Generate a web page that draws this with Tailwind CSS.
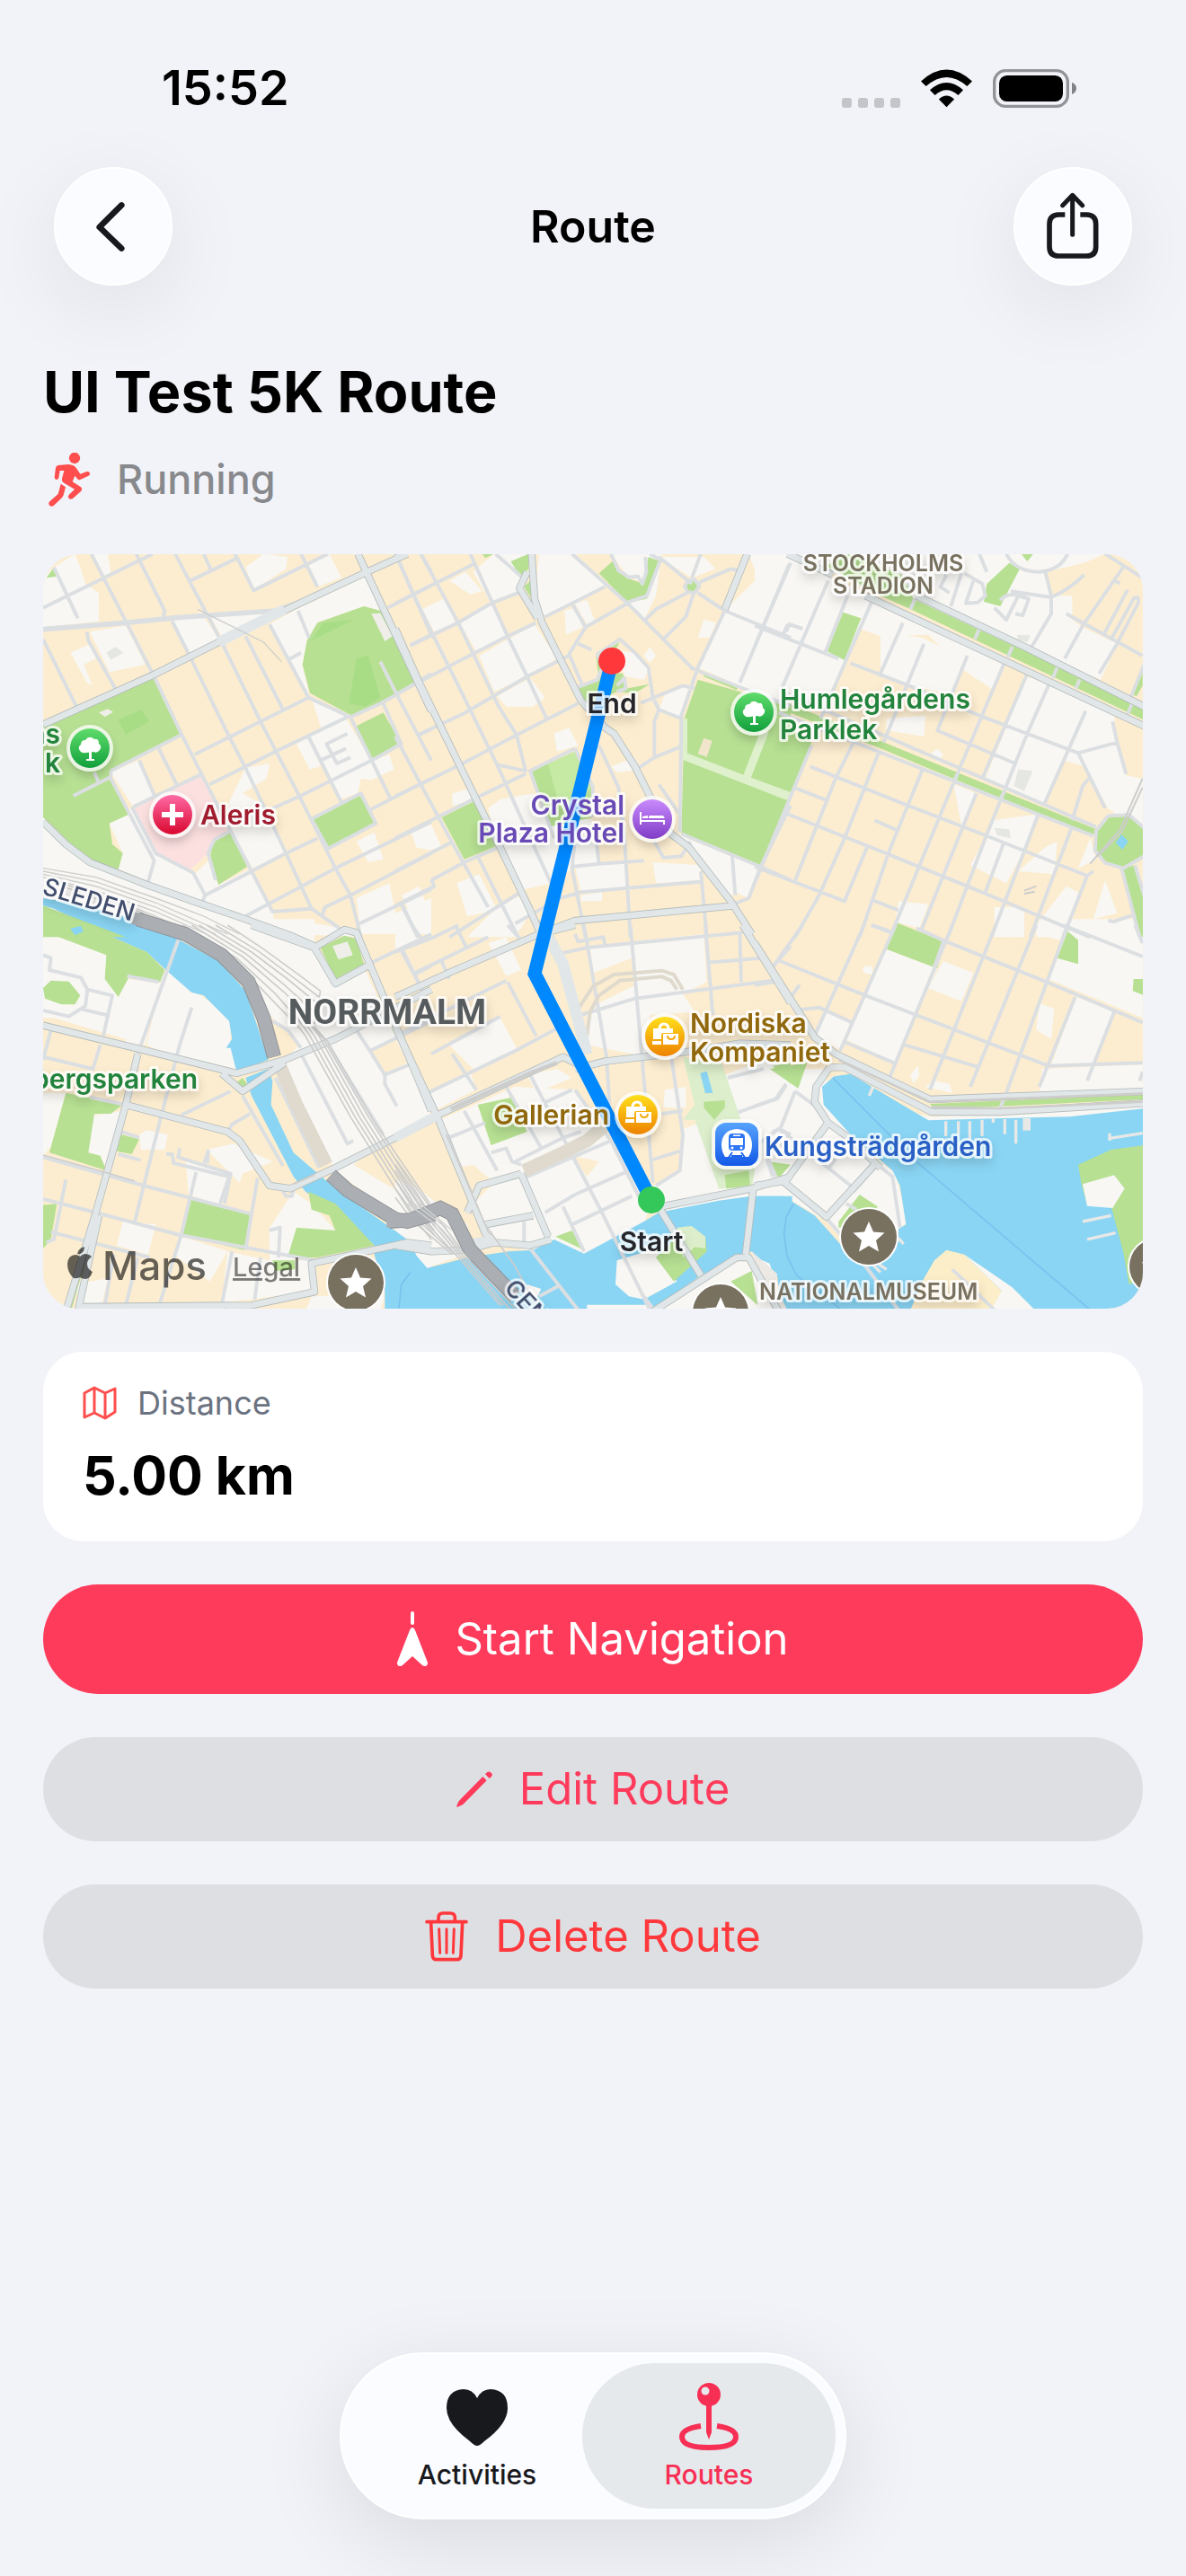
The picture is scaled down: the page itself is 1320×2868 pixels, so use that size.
<!DOCTYPE html>
<html lang="en">
<head>
<meta charset="utf-8">
<meta name="viewport" content="width=device-width, initial-scale=1">
<title>Route</title>
<script src="https://cdn.jsdelivr.net/npm/@tailwindcss/browser@4"></script>
</head>
<body class="bg-[#f2f3f8] font-['Inter','Liberation_Sans',sans-serif] text-black">
<div class="flex min-h-screen flex-col">

  <!-- Status bar -->
  <div class="flex items-center justify-between pt-[62px] pr-[122px] pl-[180px]">
    <span class="text-[54px] leading-[72px] font-semibold">15:52</span>
    <div class="flex items-end gap-[23px]">
      <div class="flex gap-[7px]">
        <span class="size-[11px] rounded-[3px] bg-[#c4c5c9]"></span>
        <span class="size-[11px] rounded-[3px] bg-[#c4c5c9]"></span>
        <span class="size-[11px] rounded-[3px] bg-[#c4c5c9]"></span>
        <span class="size-[11px] rounded-[3px] bg-[#c4c5c9]"></span>
      </div>
      <svg class="h-[43px] w-[57px]" viewBox="0 0 172 129" aria-hidden="true">
        <path d="M0 40Q86-38 172 40L155 57Q86-4 17 57Z"/>
        <path d="M30 70Q86 20 142 70L125 87Q86 53 47 87Z"/>
        <path d="M60 101Q86 76 112 101L86 127Z"/>
      </svg>
      <svg class="h-[43px] w-[93px]" viewBox="0 0 279 129" aria-hidden="true">
        <rect x="5" y="5" width="245" height="119" rx="38" fill="none" stroke="#929396" stroke-width="10"/>
        <rect x="21" y="21" width="213" height="87" rx="26"/>
        <path d="M264 44q15 6 15 20t-15 20z" fill="#808184"/>
      </svg>
    </div>
  </div>

  <!-- Navigation bar -->
  <header class="mt-[52px] flex items-center justify-between px-[60px]">
    <button type="button" aria-label="Back" class="flex size-[132px] items-center justify-center rounded-full border-2 border-white bg-[#fbfcff] pr-[6px] shadow-[0_24px_96px_rgba(0,0,0,0.08)]">
      <svg class="h-[58px] w-[34px]" viewBox="0 0 36 60" fill="none" stroke="#18191d" stroke-width="7" stroke-linecap="round" stroke-linejoin="round"><path d="M31 5L5 31l26 25"/></svg>
    </button>
    <span class="text-[50px] leading-[64px] font-semibold">Route</span>
    <button type="button" aria-label="Share" class="flex size-[132px] items-center justify-center rounded-full border-2 border-white bg-[#fbfcff] shadow-[0_24px_96px_rgba(0,0,0,0.08)]">
      <svg class="h-[76px] w-[58px]" viewBox="0 0 174 228" fill="none" stroke="#18191d" stroke-width="17" stroke-linecap="round" stroke-linejoin="round"><path stroke-linecap="butt" d="M61 75H40Q9 76 9 106V182Q9 213 40 213H133Q164 213 164 182V106Q164 76 133 75H112"/><path stroke-width="15" d="M86 142V12M53 44L86 10L119 44"/></svg>
    </button>
  </header>

  <main class="flex flex-col px-12">
    <h1 class="mt-[78px] text-[63px] leading-[80px] font-bold">UI Test 5K Route</h1>
    <div class="mt-[26px] flex items-center gap-[30px] pl-[6px]">
      <svg class="h-[60px] w-[46px]" viewBox="54 342 138 180" aria-hidden="true">
        <circle cx="141" cy="360" r="18.500" fill="#ff4e4e"/>
        <path fill="#ff4e4e" d="M87 384L120 381Q140 382 148 395L160 413L182 405Q192 404 192 413Q191 418 186 420L160 432Q154 434 150 429L142 419L134 439L162 457Q168 463 163 470L135 495Q128 500 122 495Q117 489 122 483L141 464L107 444Q97 438 99 428L106 402L92 402L88 426Q86 433 80 432Q73 431 74 424L78 392Q80 385 87 384Z"/>
        <path fill="#ff4e4e" d="M95 446L111 457L104 484Q102 490 97 494L71 519Q64 524 57 518Q52 511 58 505L86 480Z"/>
      </svg>
      <span class="text-[45px] leading-[64px] font-medium text-[#88898d]">Running</span>
    </div>

    <!-- Route map -->
    <section class="mt-[51px] overflow-hidden rounded-[40px] bg-[#fcedd0]" aria-label="Route map">
      <svg class="block h-auto w-full" viewBox="0 0 1224 840" font-family="Inter, 'Liberation Sans', sans-serif">
        <defs>
          <linearGradient id="gGreen" x2="0" y2="1"><stop stop-color="#5fdc6b"/><stop offset="1" stop-color="#12a03c"/></linearGradient>
          <linearGradient id="gRed" x2="0" y2="1"><stop stop-color="#ff6aa5"/><stop offset="1" stop-color="#d8082f"/></linearGradient>
          <linearGradient id="gPurple" x2="0" y2="1"><stop stop-color="#c98bfd"/><stop offset="1" stop-color="#803cc6"/></linearGradient>
          <linearGradient id="gGold" x2="0" y2="1"><stop stop-color="#ffdf1c"/><stop offset="1" stop-color="#ee8200"/></linearGradient>
          <linearGradient id="gBlue" x2="0" y2="1"><stop stop-color="#56a3fd"/><stop offset="1" stop-color="#1459e8"/></linearGradient>
          <filter id="soft" x="-50%" y="-50%" width="200%" height="200%"><feDropShadow dx="0" dy="6" stdDeviation="5" flood-color="#000" flood-opacity=".22"/></filter>
          <filter id="textSoft" x="-20%" y="-40%" width="140%" height="200%"><feDropShadow dx="0" dy="6" stdDeviation="6" flood-color="#000" flood-opacity=".16"/></filter>
          <g id="tree" fill="#fff"><path d="M-11 3q-3-4 1-7 0-5 5-5 4-6 10-1 5-1 5 5 4 3 1 7-3 4-7 2l-8 1q-5 1-7-2z"/><path d="M-1-2h3v14h3v2h-9v-2h3z"/></g>
          <path id="star" fill="#fff" d="M0-17l5 11.500 12.500 1-9.500 8.500 3 12.500L0 10l-11 6.500 3-12.500-9.500-8.500 12.500-1z"/>
          <g id="landmark"><circle r="33" fill="#fff"/><circle r="31" fill="#797160"/><use href="#star"/></g>
          <g id="shop"><circle r="26" fill="#fff" fill-opacity=".75" filter="url(#soft)"/><circle r="22" fill="url(#gGold)"/><path d="M-6-8q0-6 5-6t5 6" fill="none" stroke="#fff" stroke-width="3"/><path fill="#fff" d="M-13-9H9v5H-2q-2 0-2 2v5h-9zM-14 5H-4v4h-10zM-2-3H15V9H-2z"/><path d="M3-1q0 4 4 4t4-4" fill="none" stroke="#f5a80e" stroke-width="2"/></g>
          <!-- street network, one path per map sheet -->
          <path id="majA" d="M24 620L390 455L610 345L880 215L1105 110L1240 50M1075 50L1320 575M24 945L100 1020L180 1080L370 1155L540 1215L700 1270L850 1325L930 1360"/>
          <path id="majB" d="M455 50L465 200L490 280L620 540L700 630L730 650L800 760L850 860L920 985L980 1030L1120 1210L1190 1320M440 110L415 165L475 265M0 300L80 480L265 860L350 1030L450 1240L490 1330M520 1305L600 1275L1130 1225M1175 50L1100 235M0 65L30 50"/>
          <path id="majC" d="M370 190L830 405L1300 625M540 190L900 360L1300 560M110 50L260 120"/>
          <path id="majD" d="M24 335L350 415L670 495L830 450L1000 380L1320 215M340 430L300 600L200 960L100 1290M210 970L140 1290M300 600L640 690L680 720L780 870L850 880L1000 810L1320 650M620 495L690 555L830 460M720 0L930 75L1030 15L1070 25L1220 380L1320 620M930 75L1000 195L1110 135M150 1275L720 1270L930 1225L920 1130L1240 1060L1320 1070"/>
          <path id="majE" d="M0 240L200 150L480 30L600 0M0 710L130 640L560 440L620 470M0 340L140 640L300 1030L330 1060M490 -20L560 130L640 430M600 480L700 455L960 425L1150 395L1320 400M1160 0L1320 260M890 940L1190 880L1320 840M1195 880L1170 1100M885 950L1020 1170M860 1290L1140 1110L1180 1110L1280 1290M0 1070L120 1090L240 1085L330 1060L450 1070L520 1050M420 830L510 1040M300 1000L460 970M240 960L280 870L420 830"/>
          <path id="majF" d="M0 60L70 170L160 310L200 375L270 430L585 582L1300 555M250 475L300 475L590 624L820 624L1300 595M250 475L205 540L200 590L245 660L300 700L420 810M245 660L100 860L240 975L400 800M0 870L100 855"/>
        </defs>

        <!-- pale blocks -->
        <g fill="#f8f7f3">
          <path transform="translate(-8 -17) scale(.33333)" d="M24 130L60 95L130 50L150 100L165 150L210 180V275L24 295ZM185 50H240L250 110L225 130ZM700 95L760 50L840 60L835 100L727 170ZM910 90L980 50L1020 130L940 160ZM870 235L1100 125L1150 240L1095 225L940 280L905 340L890 420L915 530L780 285ZM180 310L300 290L365 420L245 445ZM115 380L180 350L200 400L160 420L188 490L170 480ZM455 275L550 245L615 340L515 385ZM580 255L780 240L620 325ZM250 780L340 740L395 855L325 895ZM24 930L180 1080L290 1050L245 950L325 895L405 1055L530 1120L575 1075L610 1155L720 1100L790 1240L800 1320H24ZM640 890L700 765L780 750L770 800L690 850L760 890L835 1050L720 1100L650 970ZM870 685L910 665L950 760L915 770ZM910 660L1035 600L1120 740L1180 720L1195 770L1120 805L1085 800L1075 850L1015 870ZM920 530L1050 590L955 640ZM1070 1200L1180 1150L1200 1250L1320 1200V1320H1085ZM1255 985L1320 950V1040L1270 1030ZM880 1320L910 1280L1020 1300L1080 1330ZM1070 1010L1130 980L1160 1070L1110 1080Z"/>
          <path transform="translate(392 -17) scale(.33333)" d="M180 140L235 110L290 175L250 185ZM260 110L330 50H440L415 180L320 215ZM480 50H600L710 155L500 260L465 200ZM215 280L320 220L375 320L270 375ZM280 390L465 285L540 400L440 460L330 510ZM90 235L170 195L200 280L130 310ZM340 525L450 465L500 530L460 560L370 560ZM530 650L580 630L610 690L540 710ZM880 60H1030L1070 100L990 130ZM1180 50H1320V560L1150 490L1010 430L1100 235L1150 190L1210 130ZM720 50H890L870 190L830 270L775 215L850 150L780 130ZM600 215L640 205L665 270L640 285ZM565 240L600 230L625 295L570 320ZM720 370L800 380L850 430L830 470L770 460ZM830 390L850 360L870 390L850 415ZM900 520L960 490L990 510L955 600L880 570ZM1010 330L1030 270L1070 280L1050 330ZM720 760L800 730L820 770L740 780ZM190 850L260 830V880L190 890ZM350 870L460 850L500 920L660 940L680 1090L590 1100L530 1150L430 1170L340 1020L310 900ZM600 1095L770 1080V1170L620 1180ZM950 990L1120 1060L1130 1190L1090 1180L1030 1110L970 1040ZM1125 1060L1220 1095L1180 1200L1135 1180ZM860 1080L1020 1090V1140L870 1150ZM50 980L120 955L160 1040L80 1030ZM205 1150L280 1120L340 1240L240 1260ZM20 1190L80 1160L110 1240L60 1270ZM340 1230L420 1190L450 1250L400 1330H240ZM620 1190L690 1180V1210H620Z"/>
          <path transform="translate(792 -17) scale(.33333)" d="M130 50H1170L1100 80L970 110L990 190L1060 190V270L1095 295L1210 350L1155 470L420 190ZM0 50H100L840 410L790 500L700 440L580 320L420 325L350 300L310 400L230 580L0 490ZM420 310L560 330L700 400L665 520L510 490L420 460ZM900 460L990 480L1200 590L1210 680L1240 790L1295 800V980L1180 900L1100 760L1035 740L970 890L770 800L840 630ZM440 600L570 590L565 660L440 640ZM590 715L610 700L630 720L610 745ZM665 820L740 850L690 960ZM790 940L945 920L900 1040L840 1150L720 1090L770 1000ZM970 1030L1010 1010L1000 1120L880 1110ZM480 1210L580 1220L550 1300L470 1280ZM1120 1000L1140 1070L1080 1100ZM1170 1140L1210 1250L1130 1270ZM940 1290L1040 1160L1080 1180L1050 1330H940ZM800 1230H900V1330H800Z"/>
          <path transform="translate(-8 413) scale(.33333)" d="M24 -20L240 100L230 160L275 240L300 180L415 190L365 400L160 340L60 310L24 310ZM420 170L440 150L650 310V400L670 480L460 440L370 400ZM300 -20H930V75L990 190L1100 150L1150 260L1320 640L1160 720L1060 800L1310 950L1200 975L1000 820L800 480L880 400L780 300L700 150L500 30ZM170 640L290 620L235 800L170 760ZM24 560H100L50 740L24 770ZM345 700L370 685L440 700L430 750H350ZM500 790L640 830L620 940L510 900ZM570 750L660 730L790 790L690 830L680 860ZM290 990L400 1000L375 1100L270 1070ZM490 1040L640 1090L580 1190L460 1100ZM640 1090L780 1120V1010L860 890L920 930L1000 1020L860 1120H930V1220L720 1250L620 1260ZM130 1200L240 1180L220 1270H150ZM1150 1080L1320 1060V1150H1290L1240 1080ZM1165 1235L1150 1290H900L920 1240ZM300 350L360 340L350 400L300 390Z"/>
          <path transform="translate(392 413) scale(.33333)" d="M0 -20H60L80 50L0 80ZM310 60L370 40L420 150L370 170ZM650 70L1030 30L1040 190L960 230L1000 290L850 300L840 440L640 400V300L680 260L800 200L790 110L660 160ZM180 400L350 310L410 420L270 490ZM110 560L250 490L270 550L130 620ZM0 490L60 470L110 600L0 660ZM440 500L540 480L590 510L470 560ZM150 650L400 540L600 550L700 680L860 900L830 1000L630 1100L460 1090L320 1060L240 900ZM900 550L970 540V610H895ZM860 870L950 820L960 680L1020 660L1100 500L1250 440L1320 490V920L890 960ZM0 850L60 870L240 1000L260 1090L90 1150L0 1060Z"/>
          <path transform="translate(792 413) scale(.33333)" d="M440 80L610 145L540 300L470 460L300 380L370 230ZM580 210L630 120L730 160L690 255ZM1050 -20H1295V310L980 180L1040 20ZM1075 240L1200 290L1130 470L990 465ZM960 480L1295 465V550L950 560ZM0 480H230L265 600L600 640L1295 600V630L580 670L380 760L470 830L510 990L480 1020L400 1060H300L240 990L100 905H0ZM230 280L320 320L290 420L210 370ZM520 500L545 470L550 500L530 530ZM570 540L600 520L650 530L660 560ZM800 -20H880L870 40L810 20ZM940 0H1040L1020 50L940 30ZM950 260L1000 280L990 380L940 350ZM360 140L390 135L395 165L365 160Z"/>
        </g>
        <path fill="#fcedd0" transform="translate(-8 413) scale(.33333)" d="M1125 140L1180 110L1215 200L1262 190L1250 140L1320 110V200L1160 250ZM1110 420L1200 380L1240 460L1170 495ZM1220 370L1320 330V530L1290 520ZM1180 740L1320 680V860L1290 850L1250 800ZM1240 100L1320 40V110L1260 150Z"/>
        <path fill="#fcedd0" transform="translate(392 413) scale(.33333)" d="M0 740L60 720L150 690L230 860L140 900L50 850ZM150 820L260 800L330 860L270 920ZM590 770L680 790L640 840ZM700 700L760 700L840 820L810 850Z"/>

        <!-- water -->
        <g fill="#8ad5f4">
          <path transform="translate(-8 -17) scale(.33333)" d="M24 1200L120 1215L300 1262L470 1325H240L60 1235L24 1225Z"/>
          <path transform="translate(-8 413) scale(.33333)" d="M180 -10H370L480 50L610 120L700 220L740 340L775 450L670 490L650 410H635L655 380L645 320L560 235L520 225L440 155L370 90L210 20ZM700 510L775 480L790 520L785 600L860 760L1000 880L1240 1050L1250 1080L1310 1150H1330V1290H1165V1220L1130 1100V1070L1060 1000L900 890L860 840L720 570Z"/>
          <path transform="translate(392 413) scale(.33333)" d="M0 1020L60 1080L90 1150L240 1110L380 1090L460 1085L530 1050L630 1097L830 990L880 960L1080 920L1190 905H1325V1200L1270 1170L1190 1090L1140 1110L1020 1170L860 1285H0ZM1018 495L1040 488L1060 560L1035 562Z"/>
          <path transform="translate(792 413) scale(.33333)" d="M225 540L265 505L320 497L580 652L830 645L1050 640L1300 612V1290H90L75 1170L0 1085V905H95L200 970L290 1070L480 1060V1015L505 1000L485 870L460 820L320 700L230 600Z"/>
        </g>
        <g fill="none" stroke="#7bc1ee" stroke-width="5"><path transform="translate(792 413) scale(.33333)" d="M260 510L540 790L1120 1285M130 930L105 975L98 1030L108 1105L140 1170L290 1285"/><path transform="translate(-8 413) scale(.33333)" d="M1212 1280L1220 1200L1250 1160"/></g>

        <!-- islands -->
        <path fill="#f8f7f3" transform="translate(392 413) scale(.33333)" d="M740 1120L870 1080L940 1190L830 1250L780 1240L735 1200ZM860 1285L1180 1100L1250 1130L1300 1285ZM640 1268H850V1290H640ZM440 1200L487 1215L470 1250L430 1230Z"/>
        <path fill="#ece8e4" transform="translate(392 413) scale(.33333)" d="M1190 1090L1275 1165L1270 1200L1310 1290H1260Z"/>
        <path fill="#fdeeca" transform="translate(792 413) scale(.33333)" d="M565 1180L600 1120L640 1085L700 1100L825 1220L800 1285H520Z"/>
        <path fill="#f8f7f3" transform="translate(792 413) scale(.33333)" d="M700 1100L860 1210L935 1285H790L825 1220Z"/>

        <!-- parks -->
        <g fill="#b7e093">
          <path transform="translate(-8 -17) scale(.33333)" d="M24 625L395 465L485 655L250 775V800L310 920L245 950L255 1020L290 1050L275 1105L180 1080L24 930ZM1095 225L1150 240L1270 480L1160 545L1055 590L915 515L890 420L905 340L940 280ZM1070 625L1160 580L1220 685L1120 735ZM920 935L1080 855L1135 950L975 1035ZM590 1005L650 975L705 1095L610 1155L580 1080ZM35 130L60 95L72 125ZM24 1225L130 1265L300 1330H24Z"/>
          <path transform="translate(392 -17) scale(.33333)" d="M0 345L75 480L0 515ZM0 625L18 690L0 700ZM385 75L445 50V100L420 130ZM430 160L450 140L455 200ZM290 50H330L300 64ZM680 115L725 75L770 130L830 150L845 60L885 75L840 200L775 212ZM966 158L978 138L1000 136L1015 158L1000 180L976 178ZM610 495L680 470L670 390L750 345L690 440L760 450L770 500L850 485L800 515L740 510L640 560ZM455 775L600 710L655 830L660 930L520 960ZM155 930L265 875L340 1025L230 1070ZM1010 470L1150 510L1320 560V870L1220 1090L955 985L965 600ZM1030 445L1145 490L1140 505L1030 460Z"/>
          <path transform="translate(792 -17) scale(.33333)" d="M240 90L310 50L490 120L530 200L1300 560V605L1080 500L520 235L420 190ZM295 245L355 265L300 405L240 375ZM850 80L885 100L820 225L765 210L775 150ZM890 50H930L910 75ZM90 540L1140 970L1130 990L830 870L420 700L90 570ZM1180 930L1250 925L1300 970V1060L1230 1098L1170 1080L1138 1040L1142 970ZM1225 1100L1270 1090L1300 1170V1330H1285ZM0 550L190 680L130 840L20 1090L0 1085ZM1295 420L1260 520L1275 525L1295 490Z"/>
          <path transform="translate(-8 413) scale(.33333)" d="M24 -20L100 30L210 20L370 90L430 150L415 190L310 175L275 240L230 180L235 100L130 60L24 20ZM24 210L50 185L110 188L148 235L130 265L85 265L30 245ZM100 560L290 600L250 630H195L175 760L215 770L235 820L45 760ZM285 700L345 715L320 765L270 755ZM24 935L70 930L50 1050L24 1080ZM515 915L720 965L695 1085L485 1035ZM910 890L1000 930L1130 1070L940 1110H840L870 1010L1000 1020L980 970L920 950ZM670 525L690 510L705 530L690 545ZM950 75L1030 35L1070 45L1095 130L1000 180ZM790 1120H865V1150L800 1155ZM185 1020L200 1000L120 1280H105Z"/>
          <path transform="translate(392 413) scale(.33333)" d="M275 600L390 575L440 690L320 735ZM535 1040L590 1020L630 1085ZM870 1110L970 1010L1035 1040L1040 1090L930 1190ZM1120 1190L1190 1155L1210 1270ZM1250 790L1320 800L1280 845ZM1260 470L1320 460V530Z"/>
          <path transform="translate(792 413) scale(.33333)" d="M470 -10L630 55L610 145L440 80ZM1045 20L1080 50V130L1010 110ZM1265 180H1300V235L1262 220ZM50 480L175 460L145 545ZM585 597L1300 565V582L820 605L600 614ZM280 990L350 900L410 940L380 1000L280 1010ZM1080 800L1190 750L1300 735V1180L1250 1200L1230 1090L1190 940L1110 935L1090 860Z"/>
        </g>
        <g transform="translate(392 413) scale(.33333)"><path fill="#dceecb" d="M960 440L1090 460L1150 640L1200 820L1190 880H1080L1000 650H960L1000 600Z"/><path fill="#b7e093" d="M1030 590L1100 585V610L1065 650L1030 610ZM1100 835L1180 820L1185 870L1105 880Z"/><path fill="#8ad5f4" d="M1018 495L1040 488L1060 560L1035 562Z"/><path fill="#dceecb" d="M940 1010L990 1005L1035 1040V1080L1000 1075L960 1110Z"/></g>
        <path fill="#a8dd86" transform="translate(-8 -17) scale(.33333)" d="M1070 400L1110 390L1150 530L1100 560L1045 550ZM275 605L350 570L378 610L300 655ZM920 340L960 280L1060 270Z"/>
        <path fill="#f0eee8" transform="translate(-8 -17) scale(.33333)" d="M1120 250L1150 248L1190 325L1165 342ZM210 580L240 568L258 578L230 594Z"/>
        <path fill="#fce0e0" transform="translate(-8 -17) scale(.33333)" d="M325 895L555 790L645 970L590 1005L575 1050L515 1105L405 1055Z"/>
        <path fill="#c6eaa4" transform="translate(392 -17) scale(.33333)" d="M510 752L600 710L655 830L600 900L550 900Z"/>
        <g fill="none" stroke="#dff0cc" stroke-width="26"><path transform="translate(392 -17) scale(.33333)" d="M962 725L1170 805L1320 860M1170 805L1235 640M962 600V730"/><path transform="translate(792 -17) scale(.33333)" d="M-30 805L110 860M-30 805L30 650"/></g>
        <path fill="#f1e5cc" transform="translate(392 -17) scale(.33333)" d="M1030 665L1058 675L1040 728L1010 718Z"/>
        <path fill="#e5e7e2" transform="translate(792 -17) scale(.33333)" d="M880 770L928 775L900 842L865 825ZM800 965L850 970L855 1000L810 990ZM875 320L920 322L910 345L880 338Z"/>
        <path fill="#e5e7e2" transform="translate(-8 -17) scale(.33333)" d="M235 380L265 360L292 380L250 404Z"/>
        <path fill="#f0eee8" transform="translate(-8 413) scale(.33333)" d="M990 70L1040 55L1058 100L1010 115Z"/>
        <path fill="#8ad5f4" transform="translate(792 -17) scale(.33333)" d="M1205 1015L1225 988L1247 1010L1228 1038Z"/>
        <path fill="#f8f7f3" transform="translate(792 413) scale(.33333)" d="M1095 865L1200 835L1235 880L1195 945L1110 938Z"/>
        <path fill="#8ad5f4" transform="translate(-8 413) scale(.33333)" d="M115 12L150 2L158 22L130 34Z"/>
        <g fill="none" stroke="#e8e8e6" stroke-width="10" transform="translate(792 413) scale(.33333)"><path d="M638 655V705M680 655V700M718 655V718M759 650V705M796 645V660M835 648V698M872 650V730M395 540L382 570M1095 990L1190 970M1110 1050L1205 1028M1185 695V720M1185 712L1295 695M410 1130L440 1150M480 1045L497 1065M390 1130L420 1160"/><path stroke-width="26" d="M908 645V686"/></g>

        <!-- side streets -->
        <g fill="none" stroke="#dcdfe2" stroke-width="12" stroke-linejoin="round">
          <path transform="translate(-8 -17) scale(.33333)" d="M24 230L390 50M60 95L140 265M185 50L300 275L390 450L485 650L555 790L720 1110L790 1245L920 1235L1020 1305M335 50L430 240L425 262M465 50L620 345L750 610L880 860L1000 1100L1050 1190L1085 1330M515 140L670 65M560 50L585 105M665 50L727 172L975 50M885 50L940 160M455 275L515 395L645 660L700 765L835 1050L920 1235M700 325L825 570M780 285L910 530M840 405L885 380M875 240L912 330M530 720L750 610L910 530L1050 595L1185 870M1040 595L800 710L580 820M1320 450L1205 520L1150 550L1050 595M1160 550L1220 685L1120 740L980 810L880 860L790 900M1150 410L1205 520L1320 740M1280 655L1320 635M1320 800L1115 905M910 660L1020 880M920 935L1085 850L1135 950L975 1035ZM940 1000L835 1050L720 1110L565 1190L550 1230M1320 945L1000 1100L700 1260M1320 1050L1050 1190L965 1230L955 1260M1320 1170L1080 1285M1220 1220L1275 1330M170 310L175 340L265 500M24 335L140 570M345 740L395 855M410 700L470 820M325 895L555 785M250 775L485 655M250 775V800L395 1075L375 1145M320 895L400 1050L525 1115L565 1190M125 858L250 795M195 780L210 815M650 975L595 1005L575 1050L600 1140M1210 70L1320 320M1175 230L1320 155M1285 50L1320 110M1250 355L1320 320M1040 650L970 685L1005 750L1050 730M1035 700L950 740"/>
          <path stroke-width="17" transform="translate(-8 -17) scale(.33333)" d="M24 302L300 280L470 263L800 240L880 212"/>
          <path transform="translate(392 -17) scale(.33333)" d="M0 215L260 85M10 70L60 185L125 320L225 520L340 755L455 1010L520 1150M85 50L210 280L345 560L405 655L435 775L345 755M250 50L325 215L375 325L440 460L505 600M335 50L425 130M50 357L125 320L210 280L320 215L415 178M0 520L190 420L375 325L470 280M75 655L225 585L440 460L580 390M0 860L225 750L405 655L610 550M0 1000L150 925L270 865L435 785M0 1110L185 1015M120 1140L230 1080L345 1030M120 1138L130 1160L0 1225M0 660L85 820L190 1015L310 1230M275 1060L410 1330M20 1215L75 1330M180 1330L410 1185M500 260L700 160M590 50L775 215L990 430M775 215L635 295L580 385L625 490M590 215L635 295M610 350L655 370M880 60L990 150M990 130L1020 50M1015 145L1120 100L1140 105M975 180L870 235L835 270M995 185L970 260L895 335M1010 180L1100 240L1320 330M850 50L885 70L840 190L775 212M720 50L745 105L780 128L810 125L825 150L838 110L835 60M610 495L675 470L690 430L675 385L750 335L800 380L845 430L860 530L880 570L955 600M820 548L960 490L1000 500M880 570L865 610V730L805 770M865 730L950 695M1010 430L955 590L950 980M985 430L1150 495L1320 560M1010 430L1100 240M1150 480L1225 300L1320 80M1295 320L1310 285M680 690L745 830L765 1000L785 1330M880 820L950 920M600 1000L590 1100L635 1330M590 1095L680 1085L830 1075M680 1085L670 1000M550 1200L620 1180L1020 1145M1020 1110L1040 1330M865 1010L895 1065L955 1060L985 1010M955 985L1220 1095L1320 1140M1320 890L1220 1095L1180 1200L1130 1220M1125 1060L1135 1190M400 1285L550 1200M600 700L450 775L530 1000M740 490L765 465L770 500L740 510M600 700L660 830L655 930M966 158L978 138L1000 136L1015 158L1000 180L976 178Z"/>
          <path transform="translate(792 -17) scale(.33333)" d="M0 290L280 400M115 85L0 360M245 140L90 500M105 310L115 285L160 300M310 190L235 380M395 200L220 600M495 280L415 460M565 350L430 680M710 390L610 640L870 750M320 415L540 500L750 590L1080 715L1210 680L1195 610M1210 680L1240 785M1080 715L1170 900M1115 800L1095 825L1060 940M835 410L670 800M910 450L760 800M985 480L910 650L770 1000L645 1330M415 710L300 1000L215 1190L135 1330M330 680L270 800L135 1140M560 770L450 1040L350 1330M670 800L460 1310M740 850L555 1310M945 925L790 1330M1105 575L965 890M1110 1125L1030 1330M1060 960L920 1330M375 1030L300 1210L0 1095M185 760L510 890L770 990L1110 1125L1130 1110M100 915L450 1055L710 1160L1120 1330M130 830L245 875M400 940L480 975M390 1205L480 1240M390 1290L455 1315M830 1020L770 1180M190 690L0 1150M90 510L1140 962M80 580L1130 992M1180 925L1250 922L1300 965M1300 1060L1230 1100L1170 1082L1136 1040L1140 975L1180 925M840 50Q870 110 950 110Q1020 105 1045 50M970 110L990 190V250L925 360M855 175L990 195Q1050 170 1100 120M750 50L775 110M640 120L620 160L650 180M690 115L655 225M700 115L760 150L770 190L745 212L705 215L730 140M800 230L840 270L880 190L915 200L895 255L870 250M820 205Q850 170 915 200M1230 95L1095 290L1035 400M1040 250L1295 390M1170 50L1295 130M1200 140L1220 148M1245 170L1165 320M1210 350L1150 450M1190 335L1265 200Q1285 185 1280 215L1215 340M1225 1100L1285 1330M1270 1090L1300 1190M1180 1275L1200 1278L1265 1255M535 200L520 235M750 300L735 335M860 360L845 395M1010 430L995 465M1085 470L1072 500M1260 550L1245 585M675 790L665 810M830 850L820 870M1300 420L1255 530"/>
          <path transform="translate(-8 413) scale(.33333)" d="M475 50L340 430M24 100L50 110L45 150L150 175L172 215L165 270L110 305L24 285M172 215L255 235L225 370M150 280L235 300M520 275L480 400L415 650L330 990M24 440L190 480L215 400M50 350L24 450M305 170L410 190M180 575L300 600M24 775L360 870L720 965M100 850L60 1050L35 1060M24 915L200 960L480 1035L930 1120M50 1025L380 1110M535 825L485 1035L410 1275M740 845L700 1085M435 765H455L460 795L645 840L615 930M480 745L475 775L650 830L630 930M562 795L575 755L572 795M285 690L345 710M275 765L350 785M485 635L650 555M640 690L655 665L715 630M690 570L825 805M230 1270L260 1100M300 1270L340 1110M655 1090L620 1270M750 1110L730 1250M780 1020L815 1010L810 1110M800 510L945 810M880 420L1040 730L1060 720M975 400L1160 700M1070 350L1115 420L1165 500V530L1205 605M1115 420L1320 320M1165 500L1250 465M1110 130L1320 30M1220 85L1290 215M1255 0L1290 50M1265 165L1320 135M790 320L840 350L885 410M820 880L835 905H855L860 880"/>
          <path transform="translate(392 413) scale(.33333)" d="M0 90L130 40L210 0M25 85L100 240M65 160L310 40M155 120L180 180M200 0L235 70M375 0L420 50M375 190L470 370M0 370L370 185M120 430L350 305M110 560L410 415L540 345M190 430L270 550M630 0L705 440L715 600M785 0L860 860M1035 0L1060 300M550 95L640 75L1160 25M600 30L610 55L695 40L700 65M620 300L800 245L1260 185M1040 125L1220 110M1150 30L1155 190M920 430L960 700L950 820L870 870M890 630L960 620M855 785L950 755M370 540L490 750M450 500L560 710L690 960L850 1285M600 550L720 720L840 960M590 550L440 620M180 710L300 660M230 620L340 820M320 760L370 745L390 790L420 800M400 790L560 710L620 690M430 845L720 720M600 900L780 820M500 960L600 900M590 1000L790 905M560 940L630 1090M175 700L240 880M450 1080L610 1285M480 1240L545 1205M1110 510L1230 480M1145 625L1270 580L1305 530M1200 740L1280 680L1320 700M1240 780L1260 840M1260 140L1320 70M430 990V1060M860 1280L830 1240"/>
          <path transform="translate(792 413) scale(.33333)" d="M160 0L60 140M365 0L200 370M470 0L285 420M660 0L450 510M630 55L600 140M805 0L585 550M940 0L720 540M1045 0L840 560M1070 240L950 540M1200 290L1110 520M1295 490L1285 520M390 0L450 20M540 10L640 55L975 190L1295 325M85 120L370 235L980 470L1295 460M1030 0L1295 105M1270 0L1295 60M500 400L750 475M300 390L465 460M0 200L65 190M150 200L120 240M130 285L215 275L325 325M0 605L75 580L105 535M135 555L85 680L60 690M135 555L210 610M80 680L320 870M45 780L70 840M270 780L245 815M330 890L410 800L460 840L485 1010M240 980L310 1060L480 1285M660 1150L800 1285M305 930L340 950M832 580L820 610"/>
        </g>

        <!-- tunnels -->
        <g fill="none" stroke="#dfdacd" stroke-width="44"><path transform="translate(-8 413) scale(.33333)" d="M815 470L870 600L970 800"/><path transform="translate(392 413) scale(.33333)" d="M430 820L560 760L640 720L700 670"/><path stroke-width="12" transform="translate(392 413) scale(.33333)" d="M610 280L660 205L730 165L890 152L930 165L960 215M640 370L650 290L680 235L750 185L890 172L920 185L940 215"/></g>

        <!-- main streets: casing, then fill -->
        <g fill="none" stroke="#b4bbbb" stroke-width="25" stroke-linejoin="round">
          <use href="#majA" transform="translate(-8 -17) scale(.33333)"/><use href="#majB" transform="translate(392 -17) scale(.33333)"/><use href="#majC" transform="translate(792 -17) scale(.33333)"/><use href="#majD" transform="translate(-8 413) scale(.33333)"/><use href="#majE" transform="translate(392 413) scale(.33333)"/><use href="#majF" transform="translate(792 413) scale(.33333)"/>
        </g>
        <g fill="none" stroke="#e1e7e8" stroke-width="20" stroke-linejoin="round">
          <use href="#majA" transform="translate(-8 -17) scale(.33333)"/><use href="#majB" transform="translate(392 -17) scale(.33333)"/><use href="#majC" transform="translate(792 -17) scale(.33333)"/><use href="#majD" transform="translate(-8 413) scale(.33333)"/><use href="#majE" transform="translate(392 413) scale(.33333)"/><use href="#majF" transform="translate(792 413) scale(.33333)"/>
          <path stroke-width="34" transform="translate(-8 -17) scale(.33333)" d="M610 345L830 235"/>
          <path stroke-width="38" transform="translate(392 413) scale(.33333)" d="M500 20L560 130L640 430"/>
          <path stroke-width="32" transform="translate(392 413) scale(.33333)" d="M0 710L130 640M220 1070L330 1050"/>
        </g>

        <!-- railway -->
        <g fill="none" stroke="#cdcdcc" stroke-width="5">
          <path stroke-width="4" transform="translate(-8 -17) scale(.33333)" d="M24 1100L200 1130L400 1200L560 1260L680 1320M24 1110L200 1145L400 1215L640 1320M24 1120L200 1160L400 1230L600 1320M24 1130L200 1175L400 1245L570 1320M60 1145L220 1190L400 1260L530 1320M100 1165L240 1205L380 1260L480 1320M120 1180L260 1215L360 1250M540 235L630 280L760 345L820 410"/>
          <path transform="translate(-8 413) scale(.33333)" d="M640 0L760 80L870 160L950 220M600 0L740 85L860 175L945 240M570 0L720 90L840 180L950 270M545 0L700 95L830 200L940 300M520 0L690 105L830 225L930 330M490 0L670 110L800 230L900 345M470 0L660 115L760 220L880 345M445 0L650 120L740 200M950 220L930 330M840 290L900 370L1050 640L1250 960L1320 1050M860 290L915 370L1065 640L1262 950L1330 1035M880 300L930 370L1080 640L1275 950L1330 1020M900 310L945 370L1095 640L1288 945L1330 1005M915 330L960 380L1110 640L1300 940M930 340L975 390L1125 650L1315 930M24 768L240 828L330 855M860 865L930 835"/>
          <path transform="translate(392 413) scale(.33333)" d="M0 780L150 990L240 1110L400 1280M0 800L130 990L230 1110L380 1280M0 820L110 980L220 1110L360 1270M0 850L90 980L210 1110L350 1270M0 880L80 990L200 1100M0 910L60 990L190 1100M170 700L300 1000L400 1140L480 1290"/>
          <path stroke-width="14" transform="translate(392 413) scale(.33333)" d="M185 615L450 495L540 460"/>
          <path stroke-width="8" transform="translate(792 413) scale(.33333)" d="M280 450L585 590L1295 563M590 608L820 612L1295 590"/>
          <path stroke-width="6" transform="translate(792 -17) scale(.33333)" d="M1295 800L1220 970L1120 1085M1295 830L1225 980L1145 1060M900 1175L940 1160M900 1185L935 1178"/>
        </g>

        <!-- motorway -->
        <g fill="none" stroke="#8f9296" stroke-width="48"><path transform="translate(-8 413) scale(.33333)" d="M340 -20L500 30L620 100L710 190L760 310L795 440M985 835L1040 885L1200 982L1240 990L1330 965"/><path transform="translate(392 413) scale(.33333)" d="M-20 990L50 985L150 945L190 965L250 1085L400 1240"/></g>
        <g fill="none" stroke="#abafb3" stroke-width="42"><path transform="translate(-8 413) scale(.33333)" d="M320 -26L500 30L620 100L710 190L760 310L795 440M985 835L1040 885L1200 982L1240 990L1330 965"/><path transform="translate(392 413) scale(.33333)" d="M-30 990L50 985L150 945L190 965L250 1085L400 1240"/></g>
        <g fill="none" stroke="#d3d3d3" stroke-width="4"><path transform="translate(392 413) scale(.33333)" d="M40 930L150 1010L250 1120M50 920L170 1010M70 920L190 1020"/></g>

        <!-- planned route -->
        <polyline points="677,719 547,467 633,119" fill="none" stroke="#0088ff" stroke-width="15"/>
        <circle cx="633" cy="119" r="15" fill="#ff383c"/>
        <circle cx="677" cy="719" r="15" fill="#34c759"/>

        <!-- landmarks -->
        <use href="#landmark" x="348" y="811"/><use href="#landmark" x="919" y="760"/><use href="#landmark" x="754" y="844"/><use href="#landmark" x="1240" y="793"/>
        <g transform="translate(52 216)"><circle r="26" fill="#fff" fill-opacity=".75" filter="url(#soft)"/><circle r="22" fill="url(#gGreen)"/><use href="#tree"/></g>
        <g transform="translate(791 176)"><circle r="26" fill="#fff" fill-opacity=".75" filter="url(#soft)"/><circle r="22" fill="url(#gGreen)"/><use href="#tree"/></g>
        <g transform="translate(144 290)"><circle r="26" fill="#fff" fill-opacity=".75" filter="url(#soft)"/><circle r="22" fill="url(#gRed)"/><path fill="#fff" d="M-3-12h6v9h9v6h-9v9h-6v-9h-9v-6h9z"/></g>
        <g transform="translate(678 295)"><circle r="26" fill="#fff" fill-opacity=".75" filter="url(#soft)"/><circle r="22" fill="url(#gPurple)"/><path fill="#fff" d="M-14-8h2v9h26v5h-2v-3h-24v3h-2zM-11-3l6-1v3h-6zM-4-1v-2l1-1h15l2 3z"/></g>
        <use href="#shop" x="692" y="537"/><use href="#shop" x="662" y="624"/>
        <g transform="translate(772 657)"><rect x="-28" y="-28" width="56" height="56" rx="16" fill="#fff" fill-opacity=".75" filter="url(#soft)"/><rect x="-24" y="-24" width="48" height="48" rx="12" fill="url(#gBlue)"/><path fill="#fff" d="M-13 14q-4-6-4-14Q-16-16 0-17 16-16 17 0q0 8-4 14z"/><rect x="-9" y="-12" width="18" height="19" rx="4" fill="#2e76f2"/><path fill="#fff" d="M-7-7H7V1H-7zM-4-10.500h8v1.500h-8z"/><circle cx="-5" cy="4" r="1.500" fill="#fff"/><circle cx="5" cy="4" r="1.500" fill="#fff"/><path d="M-5 9l-5 7M5 9l5 7M-6 13H6" stroke="#2065ee" stroke-width="2"/></g>

        <!-- labels -->
        <g font-size="30" font-weight="600" stroke="#fff" stroke-opacity=".75" stroke-width="6" stroke-linejoin="round" paint-order="stroke" filter="url(#textSoft)">
          <g fill="#20833c"><text x="19" y="211" text-anchor="end">ns</text><text x="19" y="243" text-anchor="end">k</text><text x="820" y="172">Humlegårdens</text><text x="820" y="206">Parklek</text><text x="172" y="595" text-anchor="end">bergsparken</text></g>
          <text x="175" y="301" fill="#a01c2e">Aleris</text>
          <g fill="#26272b" text-anchor="middle"><text x="633" y="177">End</text><text x="677" y="776">Start</text></g>
          <g fill="#684ab6" text-anchor="end"><text x="647" y="290">Crystal</text><text x="647" y="321">Plaza Hotel</text></g>
          <g fill="#906708"><text x="720" y="533">Nordiska</text><text x="720" y="565">Kompaniet</text><text x="630" y="635" text-anchor="end">Gallerian</text></g>
          <text x="803" y="670" fill="#2a61c6">Kungsträdgården</text>
          <g fill="#797160" font-size="25"><text x="935" y="19" text-anchor="middle">STOCKHOLMS</text><text x="935" y="44" text-anchor="middle">STADION</text><text x="797" y="830">NATIONALMUSEUM</text></g>
          <g fill="#414d6c" font-size="27" font-weight="500"><text transform="translate(-2 378) rotate(17)">SLEDEN</text><text transform="translate(512 818) rotate(48)">CEN</text></g>
          <text x="383" y="523" text-anchor="middle" font-family="Roboto, sans-serif" font-size="39" font-weight="700" fill="#575b5d">NORRMALM</text>
        </g>
        <path fill="#000" fill-opacity=".6" d="M46 779q5 0 8 3-5 4-5 8 0 6 6 9-3 8-8 8-3 0-6-2-4 2-7 1-7-6-7-16 1-10 9-10 3 0 5 2 2-2 5-3zM46 771q0 5-3 7-3 2-5 1 1-6 8-8z"/>
        <text x="66" y="808" font-size="44" font-weight="500" fill="#000" fill-opacity=".6">Maps</text>
        <a href="#legal"><text x="211" y="804" font-size="29" font-weight="500" fill="#000" fill-opacity=".5" text-decoration="underline">Legal</text></a>
      </svg>
    </section>

    <!-- Distance -->
    <section class="mt-12 rounded-[44px] bg-white px-[44px] pt-[33px] pb-[37px]">
      <div class="flex items-center gap-[23px]">
        <svg class="h-[38px] w-[38px]" viewBox="0 0 38 38" fill="none" stroke="#ff4e4e" stroke-width="3" stroke-linejoin="round" aria-hidden="true"><path d="M2 8L13 2L25 8L36 3V29L25 36L13 30L2 35ZM13 2V30M25 8V36"/></svg>
        <h2 class="text-[36px] leading-[48px] text-[#6b7280]">Distance</h2>
      </div>
      <p class="mt-[21px] text-[59px] leading-[72px] font-bold">5.00 km</p>
    </section>

    <!-- Actions -->
    <div class="mt-12 flex flex-col gap-12 text-[49px] leading-[64px]">
      <button type="button" class="flex h-[122px] items-center justify-center gap-[30px] rounded-full bg-[#ff3b5c] text-white">
        <svg class="h-[62px] w-[34px]" viewBox="0 0 34 62" fill="currentColor" aria-hidden="true"><rect x="15" y="0" width="4" height="15" rx="2"/><path d="M17 18q2 0 3 3L34 57q0 4-3 4-2 0-3-1L17 50L6 60q-1 1-3 1-3 0-3-4L14 21q1-3 3-3z"/></svg>
        Start Navigation
      </button>
      <button type="button" class="flex h-[116px] items-center justify-center gap-[30px] rounded-full bg-[#dedfe3] text-[#ff3b5c]">
        <svg class="size-[40px]" viewBox="0 0 120 120" fill="currentColor" aria-hidden="true"><path d="M88 18L101 31L25 108Q20 113 14 115L4 119Q0 120 1 116L5 106Q7 100 12 95ZM96 10L103 3Q109-1 114 4L117 7Q122 12 117 18L110 24Z"/></svg>
        Edit Route
      </button>
      <button type="button" class="flex h-[116px] items-center justify-center gap-[30px] rounded-full bg-[#dedfe3] text-[#ff383c]">
        <svg class="h-[56px] w-[48px]" viewBox="0 0 144 168" fill="none" stroke="currentColor" stroke-width="11" stroke-linecap="round" stroke-linejoin="round" aria-hidden="true"><path d="M6 35H138M45 33V20Q46 6 60 6H84Q99 6 100 20V33M20 38L25 148Q26 161 38 161H107Q119 161 120 148L125 38"/><path stroke-width="9" d="M47 59L50 139M72 59V139M97 59L94 139"/></svg>
        Delete Route
      </button>
    </div>
  </main>

  <!-- Tab bar -->
  <nav class="mt-auto mb-[63px] flex self-center rounded-full border-2 border-white bg-[#fbfcff] p-[10px] text-[30px] leading-[36px] font-medium shadow-[0_24px_96px_rgba(0,0,0,0.10)]" aria-label="Tabs">
    <a href="#activities" class="-mr-[24px] flex h-[162px] w-[282px] flex-col items-center pt-[29px] text-[#18191d]">
      <svg class="h-[64px] w-[68px]" viewBox="0 0 68 64" fill="currentColor" aria-hidden="true"><path d="M34 63Q31 63 26 58Q0 39 0 21Q0 1 19 0Q29 0 34 10Q39 0 49 0Q68 1 68 21Q68 39 42 58Q37 63 34 63Z"/></svg>
      <span class="mt-[13px]">Activities</span>
    </a>
    <a href="#routes" aria-current="page" class="flex h-[162px] w-[282px] flex-col items-center rounded-full bg-[#e5e9ec] pt-[22px] text-[#f72f55]">
      <svg class="h-[75px] w-[68px]" viewBox="0 0 68 75" aria-hidden="true"><path d="M25 48Q4 51 4 60Q4 72 34 72Q64 72 64 60Q64 51 43 48" fill="none" stroke="currentColor" stroke-width="6"/><path d="M31 24H37V55L34 63L31 55Z" fill="currentColor"/><circle cx="34" cy="13" r="13" fill="currentColor"/><circle cx="30" cy="9" r="4.500" fill="#e5e9ec"/></svg>
      <span class="mt-[9px]">Routes</span>
    </a>
  </nav>
</div>
</body>
</html>
